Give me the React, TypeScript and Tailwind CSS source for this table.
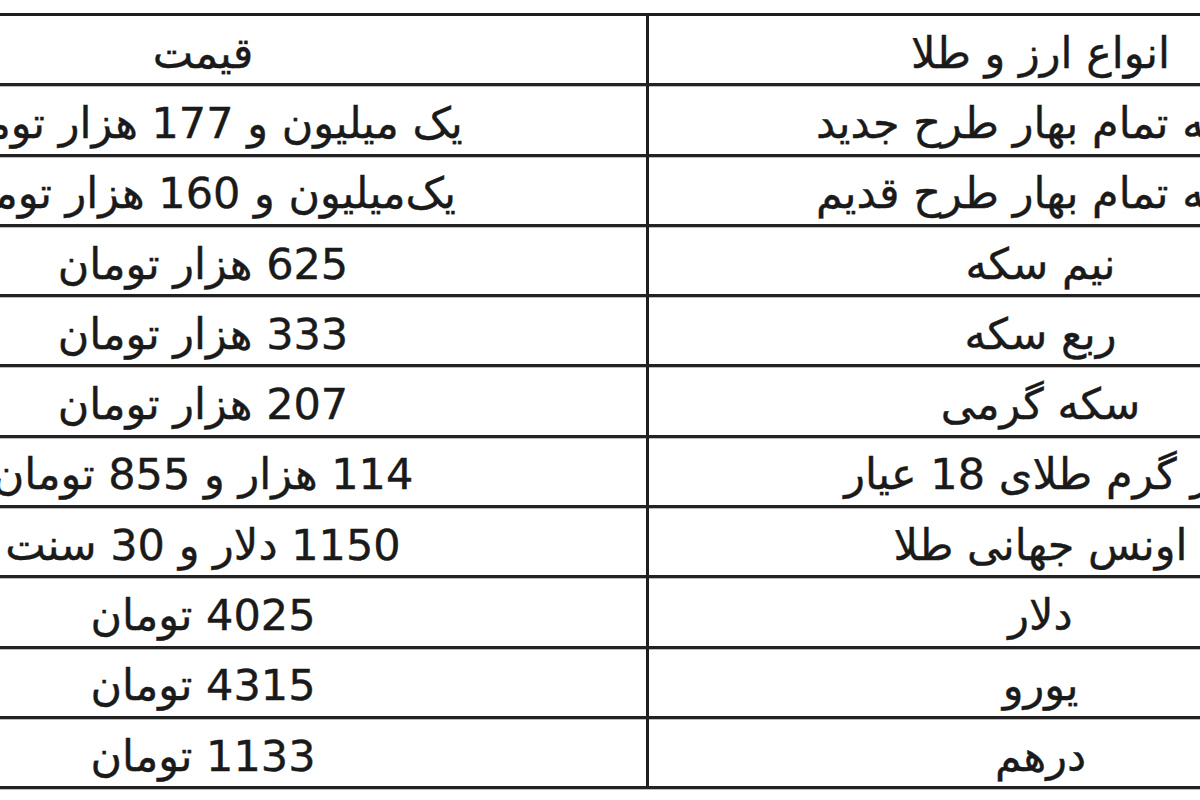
const rows: [string, string][] = [
  ["انواع ارز و طلا", "قیمت"],
  ["سکه تمام بهار طرح جدید", "یک میلیون و 177 هزار تومان"],
  ["سکه تمام بهار طرح قدیم", "یک‌میلیون و 160 هزار تومان"],
  ["نیم سکه", "625 هزار تومان"],
  ["ربع سکه", "333 هزار تومان"],
  ["سکه گرمی", "207 هزار تومان"],
  ["هر گرم طلای 18 عیار", "114 هزار و 855 تومان"],
  ["اونس جهانی طلا", "1150 دلار و 30 سنت"],
  ["دلار", "4025 تومان"],
  ["یورو", "4315 تومان"],
  ["درهم", "1133 تومان"],
]

export default function App() {
  return (
    <div className="w-[1200px] h-[800px] overflow-hidden bg-white pt-[13px]">
      <div
        dir="rtl"
        className="ml-[-240px] w-[1672px] border-t-[3px] border-[#1e1e1e] text-[43px] leading-none text-[#1a1a1a] [-webkit-text-stroke:0.4px_#1a1a1a]"
        style={{ fontFamily: '"DejaVu Sans", Tahoma, sans-serif' }}
      >
        {rows.map(([name, price]) => (
          <div
            key={name}
            className="grid grid-cols-[786px_886px] h-[70.3px] border-b-[3px] border-[#222] shadow-[0_1px_0_#bdbdbd]"
          >
            <div className="flex items-center justify-center pt-[7px] border-l-[3px] border-[#1e1e1e] whitespace-nowrap">
              {name}
            </div>
            <div className="flex items-center justify-center pt-[7px] whitespace-nowrap">
              {price}
            </div>
          </div>
        ))}
      </div>
    </div>
  )
}
